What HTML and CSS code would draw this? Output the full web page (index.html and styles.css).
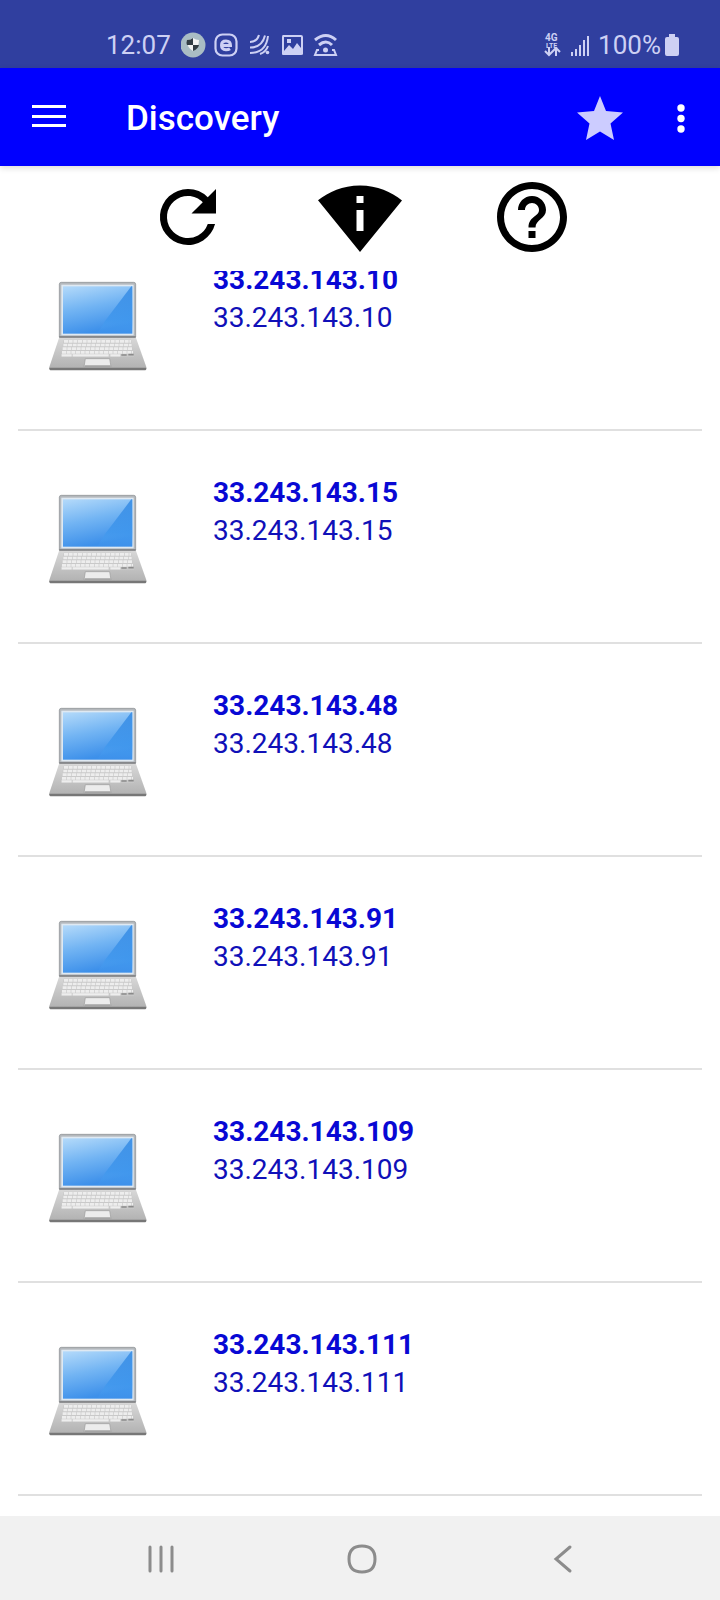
FILE: index.html
```html
<!DOCTYPE html>
<html lang="en">

<head>
    <meta charset="UTF-8">
    <meta name="viewport" content="width=device-width, initial-scale=1.0">
    <title>Discovery</title>

    <link rel="stylesheet" href="styles.css">

</head>

<body>

    <!-- shared laptop drawing -->
    <svg class="defs" aria-hidden="true">
        <defs>
            <linearGradient id="screen" x1="0" y1="0" x2="0.3" y2="1">
                <stop offset="0" stop-color="#b4dafa" />
                <stop offset="0.5" stop-color="#72b4f3" />
                <stop offset="1" stop-color="#3d90ea" />
            </linearGradient>
            <linearGradient id="shine" x1="0" y1="0" x2="0" y2="1">
                <stop offset="0" stop-color="#2f86e2" />
                <stop offset="0.7" stop-color="#3f97ed" />
                <stop offset="1" stop-color="#4ba3f3" stop-opacity="0" />
            </linearGradient>
            <linearGradient id="base" x1="0" y1="0" x2="0" y2="1">
                <stop offset="0" stop-color="#d9d9d9" />
                <stop offset="1" stop-color="#b0b0b0" />
            </linearGradient>
            <symbol id="laptop" viewBox="144 90 300 270">
                <rect x="178" y="94" width="229" height="170" rx="6" fill="#b4b8bc" stroke="#85898d" stroke-width="2" />
                <rect x="184" y="101" width="217" height="152" fill="#dfe9f2" />
                <rect x="189" y="106" width="208" height="142" fill="url(#screen)" />
                <path d="M394 106h3v142h-106l24-38z" fill="url(#shine)" opacity="0.8" />
                <path d="M178 258h229l32 90q1 9-6 9H154q-7 0-6-9z" fill="url(#base)" />
                <path d="M178 256h229v4H178z" fill="#77797b" />
                <path d="M148 350h291q1 8-6 8H154q-7 0-6-8z" fill="#777" />
                <path d="M191 266h202l9 51H182z" fill="#c9c9c9" />
                <path d="M192 271h201M190 282h205M188 293h209M186 304h213" stroke="#ededed" stroke-width="8" stroke-dasharray="12 2" fill="none" />
                <path d="M185 313h30M218 313h108M331 313h30" stroke="#eeeeee" stroke-width="7" fill="none" />
                <path d="M364 312h16M385 311h16" stroke="#8a8a8a" stroke-width="5" fill="none" />
                <path d="M256 323h73l4 25h-81z" fill="#ececec" stroke="#9b9b9b" stroke-width="2" />
                <path d="M254 343h78v7h-79z" fill="#a5a5a5" />
            </symbol>
        </defs>
    </svg>

    <div class="phone">

        <div class="status">
            <span class="clock">12:07</span>
            <svg class="notices" viewBox="0 0 160 26" aria-hidden="true">
                <circle cx="12" cy="13" r="12.5" fill="#a9bcc4" />
                <path d="M12 6q3 2 6 2 0 8-6 11-6-3-6-11 3 0 6-2z" fill="#f4f4f4" />
                <path d="M12 6v7H6q-1-2 0-5 4 0 6-2zM12 13h6q-1 4-6 6z" fill="#333d44" />
                <rect x="34.500" y="2.500" width="21" height="21" rx="7" fill="none" stroke="#cdd0f4" stroke-width="2.200" />
                <path d="M41 13.500h8.500q0-4.500-4.500-4.500t-4.500 4.200 4.500 4.600q2.500 0 4-1" fill="none" stroke="#cdd0f4" stroke-width="3" />
                <path d="M69 10q7 0 9-7M69 15.500q12 0 15-12M69 21q16 0 18-17M79 22q6-2 8-8" fill="none" stroke="#cdd0f4" stroke-width="2" />
                <circle cx="86.500" cy="20.500" r="1.800" fill="#cdd0f4" />
                <path fill-rule="evenodd" d="M102 3h18q2 0 2 2v17q0 1-2 1h-18q-1 0-1-1V5q0-2 1-2zM103 5v14l5-6 4 4 4-6 4 5V5zM106 7h4v4h-4z" fill="#cdd0f4" />
                <path d="M134 8q11-9 21 0M138 13q7-6 13 0" fill="none" stroke="#cdd0f4" stroke-width="3" />
                <path d="M138 18h-2l-2 5h21l-2-5h-2" fill="none" stroke="#cdd0f4" stroke-width="2" />
                <circle cx="144.500" cy="18" r="2.500" fill="#cdd0f4" />
            </svg>
            <svg class="network" viewBox="0 0 46 26" aria-hidden="true">
                <text x="1" y="9" class="tiny">4G</text>
                <text x="2" y="16" class="tiny lte">LTE</text>
                <path d="M5 15v8M1 19l4 4 3-3M12 24v-8M8 20l4-4 4 4" fill="none" stroke="#cdd0f4" stroke-width="2" />
                <path d="M27 20h2v4h-2zM31 17h2v7h-2zM35 13h2v11h-2zM39 8h2v16h-2zM43 4h2v20h-2z" fill="#cdd0f4" />
            </svg>
            <span class="percent">100%</span>
            <svg class="battery" viewBox="0 0 14 22" aria-hidden="true">
                <path d="M4 0h6v3h2q2 0 2 2v15q0 2-2 2H2q-2 0-2-2V5q0-2 2-2h2z" fill="#cdd0f4" />
            </svg>
        </div>

        <header class="appbar">
            <button class="icon menu" aria-label="Menu">
                <svg viewBox="0 0 34 26"><path d="M0 0h34v3H0zM0 10h34v3H0zM0 19h34v3H0z" /></svg>
            </button>
            <h1>Discovery</h1>
            <button class="icon star" aria-label="Favourites">
                <svg viewBox="0 0 46 44"><path d="M23 0l6 15 17 1.500-12.500 11L37 44l-14-8.500L9 44l3.500-16.500L0 16.500 17 15z" /></svg>
            </button>
            <button class="icon more" aria-label="More options">
                <svg viewBox="0 0 8 30"><circle cx="4" cy="5" r="3.700" /><circle cx="4" cy="15.500" r="3.700" /><circle cx="4" cy="26" r="3.700" /></svg>
            </button>
        </header>

        <div class="tools">
            <button class="icon tool" aria-label="Refresh">
                <svg viewBox="0 0 24 24"><path d="M17.65 6.350A7.958 7.958 0 0 0 12 4a8 8 0 1 0 7.730 10h-2.080A6 6 0 1 1 12 6c1.660 0 3.140.690 4.220 1.780L13 11h7V4z" /></svg>
            </button>
            <button class="icon tool" aria-label="Network info">
                <svg viewBox="0 0 24 24"><path d="M12 3C6.950 3 3.150 4.850 0 7.230L12 22 24 7.250C20.850 4.870 17.050 3 12 3zm1 13h-2v-6h2v6zm-2-8V6h2v2h-2z" /></svg>
            </button>
            <button class="icon tool" aria-label="Help">
                <svg viewBox="0 0 24 24"><path d="M11 18h2v-2h-2v2zm1-16C6.480 2 2 6.480 2 12s4.480 10 10 10 10-4.480 10-10S17.520 2 12 2zm0 18c-4.410 0-8-3.590-8-8s3.590-8 8-8 8 3.590 8 8-3.590 8-8 8zm0-14c-2.210 0-4 1.790-4 4h2c0-1.100.900-2 2-2s2 .900 2 2c0 2-3 1.750-3 5h2c0-2.250 3-2.500 3-5 0-2.210-1.790-4-4-4z" /></svg>
            </button>
        </div>

        <main class="list">
            <ul>
                <li>
                    <svg class="device"><use href="#laptop" /></svg>
                    <div>
                        <p class="name">33.243.143.10</p>
                        <p class="address">33.243.143.10</p>
                    </div>
                </li>
                <li>
                    <svg class="device"><use href="#laptop" /></svg>
                    <div>
                        <p class="name">33.243.143.15</p>
                        <p class="address">33.243.143.15</p>
                    </div>
                </li>
                <li>
                    <svg class="device"><use href="#laptop" /></svg>
                    <div>
                        <p class="name">33.243.143.48</p>
                        <p class="address">33.243.143.48</p>
                    </div>
                </li>
                <li>
                    <svg class="device"><use href="#laptop" /></svg>
                    <div>
                        <p class="name">33.243.143.91</p>
                        <p class="address">33.243.143.91</p>
                    </div>
                </li>
                <li>
                    <svg class="device"><use href="#laptop" /></svg>
                    <div>
                        <p class="name">33.243.143.109</p>
                        <p class="address">33.243.143.109</p>
                    </div>
                </li>
                <li>
                    <svg class="device"><use href="#laptop" /></svg>
                    <div>
                        <p class="name">33.243.143.111</p>
                        <p class="address">33.243.143.111</p>
                    </div>
                </li>
            </ul>
        </main>

        <nav class="keys">
            <button class="icon key" aria-label="Recent apps">
                <svg viewBox="0 0 30 30"><path d="M4 3v24M15 3v24M26 3v24" /></svg>
            </button>
            <button class="icon key" aria-label="Home">
                <svg viewBox="0 0 30 30"><path d="M15 2q13 0 13 13T15 28 2 15 15 2z" /></svg>
            </button>
            <button class="icon key" aria-label="Back">
                <svg viewBox="0 0 30 30"><path d="M22 3L8 15l14 12" /></svg>
            </button>
        </nav>

    </div>

</body>

</html>
```

FILE: styles.css
```css
body {
    margin: 0;
    background-color: #fff;
    font-family: Roboto, "Liberation Sans", sans-serif;
}

h1,
p,
ul {
    margin: 0;
    padding: 0;
}

svg {
    display: block;
}

.defs {
    position: absolute;
    width: 0;
    height: 0;
}

.phone {
    display: flex;
    flex-direction: column;
    height: 100vh;
}

.icon {
    padding: 0;
    border: none;
    background: none;
    color: inherit;
    cursor: pointer;
}

.icon svg {
    fill: currentColor;
}

/* status bar */
.status {
    display: flex;
    flex: none;
    align-items: center;
    box-sizing: border-box;
    height: 68px;
    padding: 22px 41px 0 106px;
    background-color: #303f9f;
    color: #cdd0f4;
    font-size: 26px;
}

.notices {
    width: 160px;
    height: 26px;
    margin-left: 10px;
}

.network {
    width: 46px;
    height: 26px;
    margin-left: auto;
}

.tiny {
    fill: #cdd0f4;
    font-size: 10px;
    font-weight: 700;
}

.lte {
    font-size: 7px;
}

.percent {
    margin-left: 8px;
}

.battery {
    width: 14px;
    height: 22px;
    margin-left: 4px;
}

/* app bar */
.appbar {
    display: flex;
    flex: none;
    align-items: center;
    box-sizing: border-box;
    height: 98px;
    padding: 2px 35px 0 32px;
    background-color: #0000ff;
    color: #fff;
    box-shadow: 0 2px 6px rgba(0, 0, 0, 0.15);
    z-index: 1;
}

.appbar h1 {
    flex: 1;
    margin-left: 60px;
    font-size: 35px;
    font-weight: 500;
}

.menu svg {
    width: 34px;
    height: 26px;
}

.star {
    margin-right: 54px;
    color: #ccccff;
}

.star svg {
    width: 46px;
    height: 44px;
}

.more svg {
    width: 8px;
    height: 30px;
}

/* tool row */
.tools {
    display: flex;
    flex: none;
    justify-content: center;
    gap: 88px;
    padding: 9px 0 12px;
    color: #000;
}

.tool svg {
    width: 84px;
    height: 84px;
}

/* device list, scrolled to its end */
.list {
    display: flex;
    flex: 1;
    flex-direction: column;
    justify-content: flex-end;
    min-height: 0;
    overflow: hidden;
    padding: 0 18px 20px;
}

.list ul {
    list-style: none;
}

.list li {
    display: flex;
    gap: 65px;
    box-sizing: border-box;
    height: 213px;
    padding: 43px 0 0 30px;
    border-bottom: 2px solid #e0e0e0;
}

.device {
    width: 100px;
    height: 90px;
    margin-top: 20px;
}

.name,
.address {
    font-size: 28px;
    line-height: 38px;
}

.name {
    color: #0808d4;
    font-weight: 700;
}

.address {
    color: #1010b8;
}

/* navigation keys */
.keys {
    display: flex;
    flex: none;
    align-items: center;
    justify-content: center;
    gap: 171px;
    box-sizing: border-box;
    height: 84px;
    padding: 2px 0 0 3px;
    background-color: #f1f1f1;
    color: #8c8c8c;
}

.key svg {
    width: 30px;
    height: 30px;
    fill: none;
    stroke: currentColor;
    stroke-width: 3;
    stroke-linecap: round;
}
```
